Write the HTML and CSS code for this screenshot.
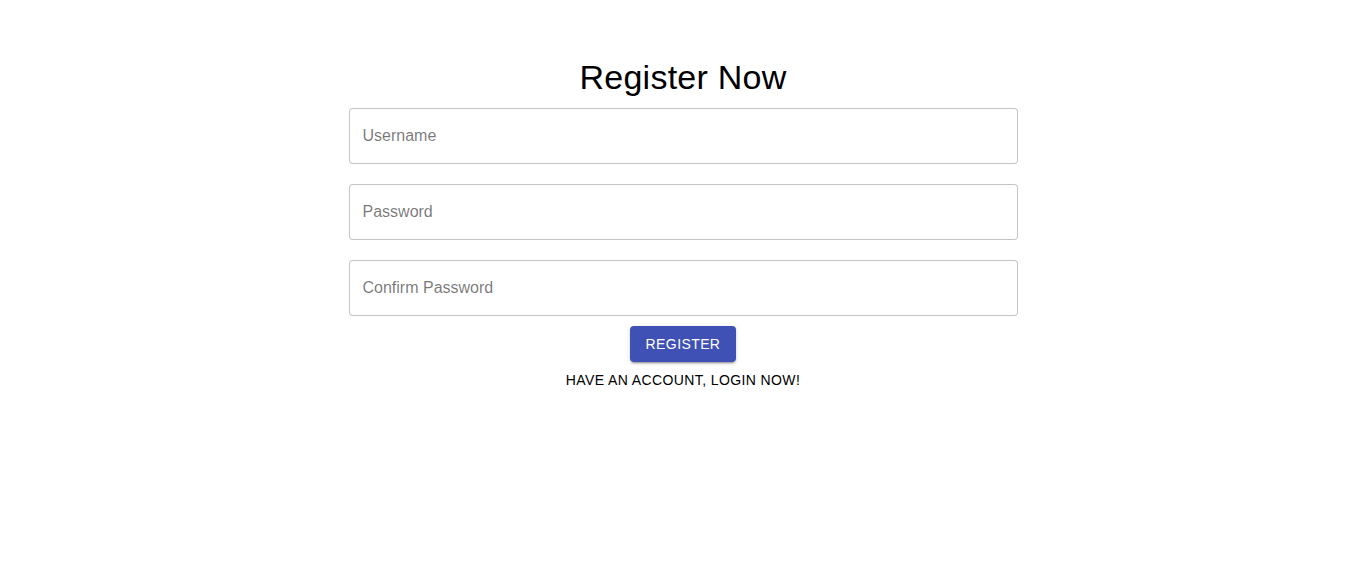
FILE: index.html
```html
<!DOCTYPE html>
<html>
<head>
<meta charset="utf-8">
<link rel="stylesheet" href="styles.css">
</head>
<body>
<div class="page">
  <form class="form">
    <h1 class="title">Register Now</h1>
    <div class="field"><input class="input" type="text" placeholder="Username"></div>
    <div class="field"><input class="input" type="password" placeholder="Password"></div>
    <div class="field"><input class="input" type="password" placeholder="Confirm Password"></div>
    <div class="actions">
      <button type="button" class="btn">Register</button>
      <a class="link">Have an account, login now!</a>
    </div>
  </form>
</div>
</body>
</html>
```
FILE: styles.css
```css
html, body {
  margin: 0;
  padding: 0;
  background: #fff;
}
body {
  font-family: "Liberation Sans", Arial, sans-serif;
  color: #000;
}
.page {
  display: flex;
  justify-content: center;
  padding-top: 56px;
}
.form {
  width: 669px;
  display: flex;
  flex-direction: column;
}
.title {
  margin: 0 0 10px;
  font-size: 34px;
  font-weight: 400;
  line-height: 42px;
  letter-spacing: 0.25px;
  text-align: center;
}
.field {
  margin-bottom: 20px;
}
.field:nth-of-type(3) {
  margin-bottom: 10px;
}
.input {
  box-sizing: border-box;
  width: 100%;
  height: 56px;
  border: 1px solid rgba(0,0,0,0.23);
  border-radius: 4px;
  padding: 0 13px;
  font-family: "Liberation Sans", Arial, sans-serif;
  font-size: 16px;
  color: #000;
  outline: none;
  background: #fff;
}
.input::placeholder {
  color: rgba(0,0,0,0.54);
}
.actions {
  display: flex;
  flex-direction: column;
  align-items: center;
}
.btn {
  height: 36px;
  padding: 0 16px;
  border: none;
  border-radius: 4px;
  background: #3f51b5;
  color: #fff;
  font-family: "Liberation Sans", Arial, sans-serif;
  font-size: 14px;
  text-transform: uppercase;
  letter-spacing: 0.4px;
  box-shadow: 0 3px 1px -2px rgba(0,0,0,0.2), 0 2px 2px 0 rgba(0,0,0,0.14), 0 1px 5px 0 rgba(0,0,0,0.12);
  cursor: pointer;
}
.link {
  margin-top: 10px;
  font-size: 14px;
  line-height: 16px;
  letter-spacing: 0.4px;
  text-transform: uppercase;
  color: #000;
}
```
